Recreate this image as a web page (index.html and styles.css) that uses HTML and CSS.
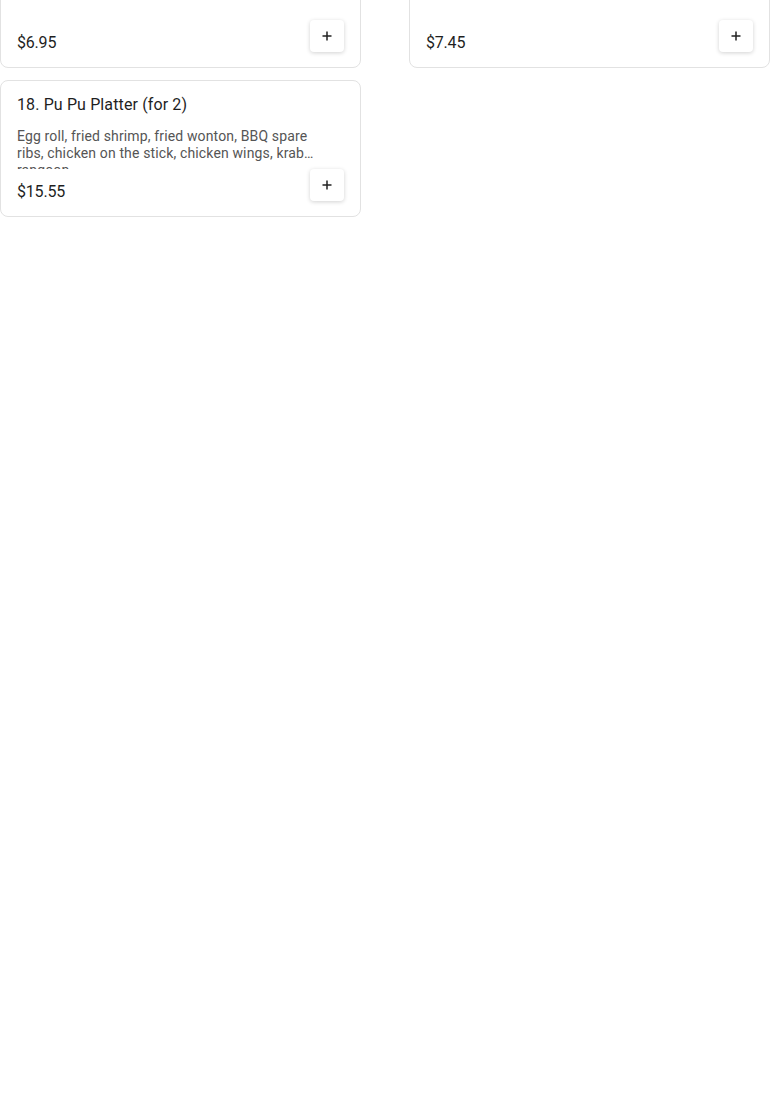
FILE: index.html
```html
<!DOCTYPE html>
<html lang="en">
<head>
<meta charset="utf-8">
<title>Menu</title>
<link rel="stylesheet" href="styles.css">
</head>
<body>
<div class="grid">
  <div class="card">
    <div class="title">16. Crab Rangoon (8)</div>
    <div class="desc">Crispy wontons with cream cheese.</div>
    <div class="foot">
      <span class="price">$6.95</span>
      <button class="add" aria-label="Add"><svg viewBox="0 0 12 12" width="12" height="12"><path d="M6 1.5v9M1.5 6h9" stroke="#222" stroke-width="1.5" fill="none"/></svg></button>
    </div>
  </div>
  <div class="card">
    <div class="title">17. Fried Chicken Wings (6)</div>
    <div class="desc">Served hot and crispy.</div>
    <div class="foot">
      <span class="price">$7.45</span>
      <button class="add" aria-label="Add"><svg viewBox="0 0 12 12" width="12" height="12"><path d="M6 1.5v9M1.5 6h9" stroke="#222" stroke-width="1.5" fill="none"/></svg></button>
    </div>
  </div>
  <div class="card">
    <div class="title">18. Pu Pu Platter (for 2)</div>
    <div class="desc">Egg roll, fried shrimp, fried wonton, BBQ spare ribs, chicken on the stick, chicken wings, krab rangoon</div>
    <div class="foot">
      <span class="price">$15.55</span>
      <button class="add" aria-label="Add"><svg viewBox="0 0 12 12" width="12" height="12"><path d="M6 1.5v9M1.5 6h9" stroke="#222" stroke-width="1.5" fill="none"/></svg></button>
    </div>
  </div>
</div>
</body>
</html>
```

FILE: styles.css
```css
html, body {
  margin: 0;
  padding: 0;
  background: #fff;
  font-family: Roboto, "Liberation Sans", sans-serif;
  overflow: hidden;
}
.grid {
  display: grid;
  grid-template-columns: 361px 361px;
  column-gap: 48px;
  row-gap: 12px;
  margin-top: -69px;
}
.card {
  box-sizing: border-box;
  height: 137px;
  border: 1px solid #e2e2e2;
  border-radius: 8px;
  padding: 12px 16px 12px;
  display: flex;
  flex-direction: column;
  background: #fff;
}
.title {
  font-size: 16px;
  line-height: 24px;
  color: #1f1f1f;
  letter-spacing: 0.12px;
}
.desc {
  margin-top: 11px;
  font-size: 14px;
  line-height: 17px;
  color: #555;
  letter-spacing: 0.14px;
  height: 42px;
  overflow: hidden;
  display: -webkit-box;
  -webkit-box-orient: vertical;
  -webkit-line-clamp: 2;
  padding-right: 30px;
}
.foot {
  margin-top: auto;
  display: flex;
  justify-content: space-between;
  align-items: flex-end;
}
.price {
  font-size: 16px;
  line-height: 24px;
  color: #1f1f1f;
  letter-spacing: -0.2px;
}
.add {
  width: 34px;
  height: 32px;
  margin-bottom: 3px;
  padding: 0;
  border: none;
  border-radius: 4px;
  background: #fff;
  box-shadow: 0 1px 4px rgba(0,0,0,0.18);
  display: flex;
  align-items: center;
  justify-content: center;
}
```
